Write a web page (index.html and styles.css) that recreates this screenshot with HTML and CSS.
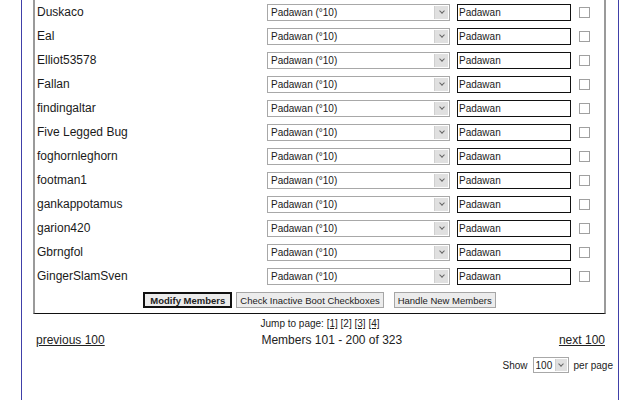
FILE: index.html
```html
<!DOCTYPE html>
<html>
<head>
    <title>Members</title>
    <link rel="stylesheet" href="styles.css">
</head>
<body>
    <div class="page">
        <form class="members" method="POST">
            <div class="member-list">
                <div class="row"><span class="name">Duskaco</span><span class="combo"><select name="rank"><option>Padawan (°10)</option></select><span class="arrow"></span></span><input class="title" type="text" value="Padawan"><input class="boot" type="checkbox"></div>
                <div class="row"><span class="name">Eal</span><span class="combo"><select name="rank"><option>Padawan (°10)</option></select><span class="arrow"></span></span><input class="title" type="text" value="Padawan"><input class="boot" type="checkbox"></div>
                <div class="row"><span class="name">Elliot53578</span><span class="combo"><select name="rank"><option>Padawan (°10)</option></select><span class="arrow"></span></span><input class="title" type="text" value="Padawan"><input class="boot" type="checkbox"></div>
                <div class="row"><span class="name">Fallan</span><span class="combo"><select name="rank"><option>Padawan (°10)</option></select><span class="arrow"></span></span><input class="title" type="text" value="Padawan"><input class="boot" type="checkbox"></div>
                <div class="row"><span class="name">findingaltar</span><span class="combo"><select name="rank"><option>Padawan (°10)</option></select><span class="arrow"></span></span><input class="title" type="text" value="Padawan"><input class="boot" type="checkbox"></div>
                <div class="row"><span class="name">Five Legged Bug</span><span class="combo"><select name="rank"><option>Padawan (°10)</option></select><span class="arrow"></span></span><input class="title" type="text" value="Padawan"><input class="boot" type="checkbox"></div>
                <div class="row"><span class="name">foghornleghorn</span><span class="combo"><select name="rank"><option>Padawan (°10)</option></select><span class="arrow"></span></span><input class="title" type="text" value="Padawan"><input class="boot" type="checkbox"></div>
                <div class="row"><span class="name">footman1</span><span class="combo"><select name="rank"><option>Padawan (°10)</option></select><span class="arrow"></span></span><input class="title" type="text" value="Padawan"><input class="boot" type="checkbox"></div>
                <div class="row"><span class="name">gankappotamus</span><span class="combo"><select name="rank"><option>Padawan (°10)</option></select><span class="arrow"></span></span><input class="title" type="text" value="Padawan"><input class="boot" type="checkbox"></div>
                <div class="row"><span class="name">garion420</span><span class="combo"><select name="rank"><option>Padawan (°10)</option></select><span class="arrow"></span></span><input class="title" type="text" value="Padawan"><input class="boot" type="checkbox"></div>
                <div class="row"><span class="name">Gbrngfol</span><span class="combo"><select name="rank"><option>Padawan (°10)</option></select><span class="arrow"></span></span><input class="title" type="text" value="Padawan"><input class="boot" type="checkbox"></div>
                <div class="row"><span class="name">GingerSlamSven</span><span class="combo"><select name="rank"><option>Padawan (°10)</option></select><span class="arrow"></span></span><input class="title" type="text" value="Padawan"><input class="boot" type="checkbox"></div>
            </div>
            <div class="actions">
                <button type="submit" class="btn btn-main">Modify Members</button>
                <button type="button" class="btn">Check Inactive Boot Checkboxes</button>
                <button type="button" class="btn btn-last">Handle New Members</button>
            </div>
        </form>

        <div class="jump">Jump to page: <a href="#">[1]</a> <span class="current">[2]</span> <a href="#">[3]</a> <a href="#">[4]</a></div>

        <div class="pager">
            <a href="#">previous 100</a>
            <span class="count">Members 101 - 200 of 323</span>
            <a href="#">next 100</a>
        </div>

        <div class="per-page">
            Show
            <span class="combo combo-small"><select name="per_page"><option>100</option></select><span class="arrow"></span></span>
            per page
        </div>
    </div>
</body>
</html>
```

FILE: styles.css
```css
body {
    margin: 0;
    font-family: "Liberation Sans", Arial, sans-serif;
    color: #1a1a1a;
    background-color: #fff;
}

.page {
    width: 596px;
    min-height: 400px;
    margin-left: 21px;
    border-left: 1px solid #4040a8;
    border-right: 1px solid #4040a8;
}

.members {
    width: 569px;
    margin: 0 0 0 11px;
    border-left: 2px solid #9a9a9a;
    border-right: 2px solid #9a9a9a;
    border-bottom: 1px solid #111;
}

.row {
    display: grid;
    grid-template-columns: 232px 190px 122px auto;
    align-items: center;
    height: 24px;
}

.name {
    padding-left: 2px;
    font-size: 12px;
}

.combo {
    display: flex;
    box-sizing: border-box;
    width: 183px;
    height: 17px;
    border: 1px solid #a8a8a8;
    background-color: #fff;
}

.combo select {
    flex: 1;
    min-width: 0;
    padding: 0 0 0 3px;
    border: none;
    outline: none;
    background: transparent;
    -webkit-appearance: none;
    appearance: none;
    font-family: "Liberation Sans", Arial, sans-serif;
    font-size: 10px;
    color: #1a1a1a;
}

.arrow {
    display: flex;
    align-items: center;
    justify-content: center;
    width: 13px;
    margin: 1px;
    background-color: #e0e0e0;
    border-left: 1px solid #cfcfcf;
}

.arrow::after {
    content: "";
    width: 3px;
    height: 3px;
    margin-top: -3px;
    border-right: 1.5px solid #666;
    border-bottom: 1.5px solid #666;
    transform: rotate(45deg);
}

.title {
    box-sizing: border-box;
    width: 114px;
    height: 17px;
    margin: 0;
    padding: 0 1px;
    border: 1px solid #111;
    font-family: "Liberation Sans", Arial, sans-serif;
    font-size: 10px;
    color: #1a1a1a;
}

.boot {
    -webkit-appearance: none;
    appearance: none;
    width: 11px;
    height: 11px;
    margin: 0;
    border: 1px solid #a0a0a0;
    background-color: #fff;
}

.actions {
    display: flex;
    justify-content: center;
    padding: 4px 0 5px;
}

.btn {
    height: 16px;
    margin: 0 2px;
    padding: 0 3px;
    border: 1px solid #a6a6a6;
    background-color: #ececec;
    font-family: "Liberation Sans", Arial, sans-serif;
    font-size: 9.5px;
    color: #222;
}

.btn-main {
    padding: 0 5px;
    border: 2px solid #111;
    font-weight: bold;
}

.btn-last {
    margin-left: 8px;
}

.jump {
    margin-top: 3px;
    text-align: center;
    font-size: 10px;
    line-height: 13px;
    color: #222;
}

.jump a {
    color: #222;
}

.pager {
    display: flex;
    justify-content: space-between;
    padding: 3px 13px 0 14px;
    font-size: 12px;
    line-height: 15px;
}

.pager a {
    color: #222;
}

.count {
    color: #222;
}

.per-page {
    display: flex;
    align-items: center;
    justify-content: flex-end;
    gap: 5px;
    padding: 9px 5px 0 0;
    font-size: 10px;
    color: #222;
}

.combo-small {
    width: 36px;
    height: 16px;
}

.combo-small select {
    padding-left: 2px;
}

.combo-small .arrow {
    width: 11px;
}
```
